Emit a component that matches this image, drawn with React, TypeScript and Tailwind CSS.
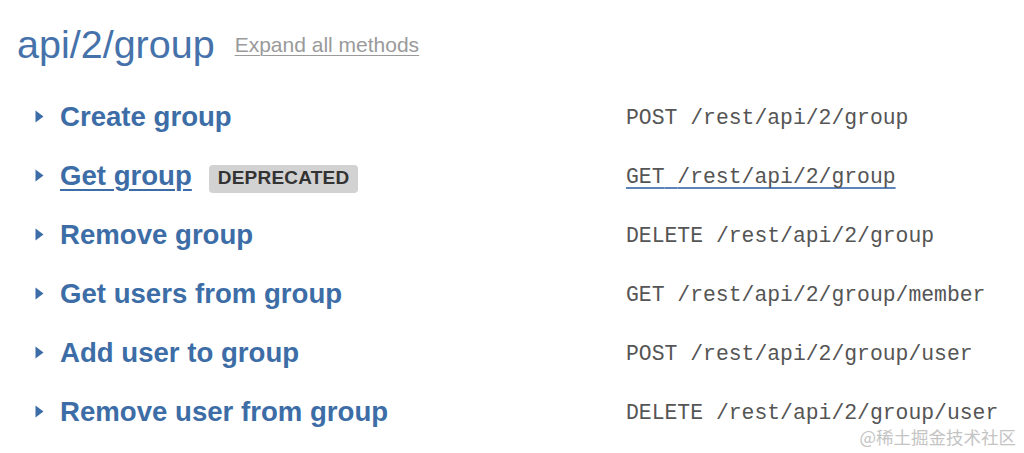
import React from 'react';

type Method = {
    name: string;
    verb: string;
    path: string;
    deprecated?: boolean;
    hovered?: boolean;
};

const methods: Method[] = [
    { name: 'Create group', verb: 'POST', path: '/rest/api/2/group' },
    { name: 'Get group', verb: 'GET', path: '/rest/api/2/group', deprecated: true, hovered: true },
    { name: 'Remove group', verb: 'DELETE', path: '/rest/api/2/group' },
    { name: 'Get users from group', verb: 'GET', path: '/rest/api/2/group/member' },
    { name: 'Add user to group', verb: 'POST', path: '/rest/api/2/group/user' },
    { name: 'Remove user from group', verb: 'DELETE', path: '/rest/api/2/group/user' },
];

const Caret = () => (
    <svg width="9" height="13" viewBox="0 0 9 13" className="shrink-0">
        <path d="M0.5 0.5 L8.5 6.5 L0.5 12.5 Z" fill="#3d6da6" />
    </svg>
);

export default function App() {
    return (
        <div className="relative w-[1024px] h-[453px] bg-white overflow-hidden font-['Liberation_Sans',Arial,sans-serif]">
            <div className="pt-[25px] pl-[17px]">
                <div className="flex items-end h-[39px]">
                    <h1 className="text-[39.5px] leading-[39px] font-normal text-[#4672ab]">api/2/group</h1>
                    <a className="ml-[20px] mb-[7px] text-[21px] leading-[24px] text-[#9a9a9a] underline underline-offset-[3px] decoration-[1px]">
                        Expand all methods
                    </a>
                </div>

                <div className="mt-[23px] ml-[18px]">
                    {methods.map((m) => (
                        <div key={m.name} className="flex items-center h-[59px]">
                            <div className="flex items-center w-[591px]">
                                <Caret />
                                <span
                                    className={
                                        'ml-[16px] text-[27.6px] leading-[30px] font-bold text-[#3d6da6]' +
                                        (m.hovered ? ' underline underline-offset-[4px] decoration-[2px]' : '')
                                    }
                                >
                                    {m.name}
                                </span>
                                {m.deprecated && (
                                    <span className="ml-[17px] mt-[6px] h-[28px] px-[9px] flex items-center rounded-[4px] bg-[#d2d2d2] text-[19px] font-bold text-[#333333] tracking-[0.2px]">
                                        DEPRECATED
                                    </span>
                                )}
                            </div>
                            <span
                                className={
                                    "mt-[3px] font-['Liberation_Mono','Courier_New',monospace] text-[21.4px] leading-[26px] text-[#555555] whitespace-pre" +
                                    (m.hovered ? ' underline underline-offset-[4px] decoration-[#5a84ba] decoration-[1.5px]' : '')
                                }
                            >
                                {m.verb} {m.path}
                            </span>
                        </div>
                    ))}
                </div>
            </div>

            <div className="absolute right-[8px] bottom-[6px] text-[17.5px] leading-[20px] text-[#c4c4c4] font-['Noto_Sans_CJK_SC','Noto_Sans',sans-serif]">
                @稀土掘金技术社区
            </div>
        </div>
    );
}
